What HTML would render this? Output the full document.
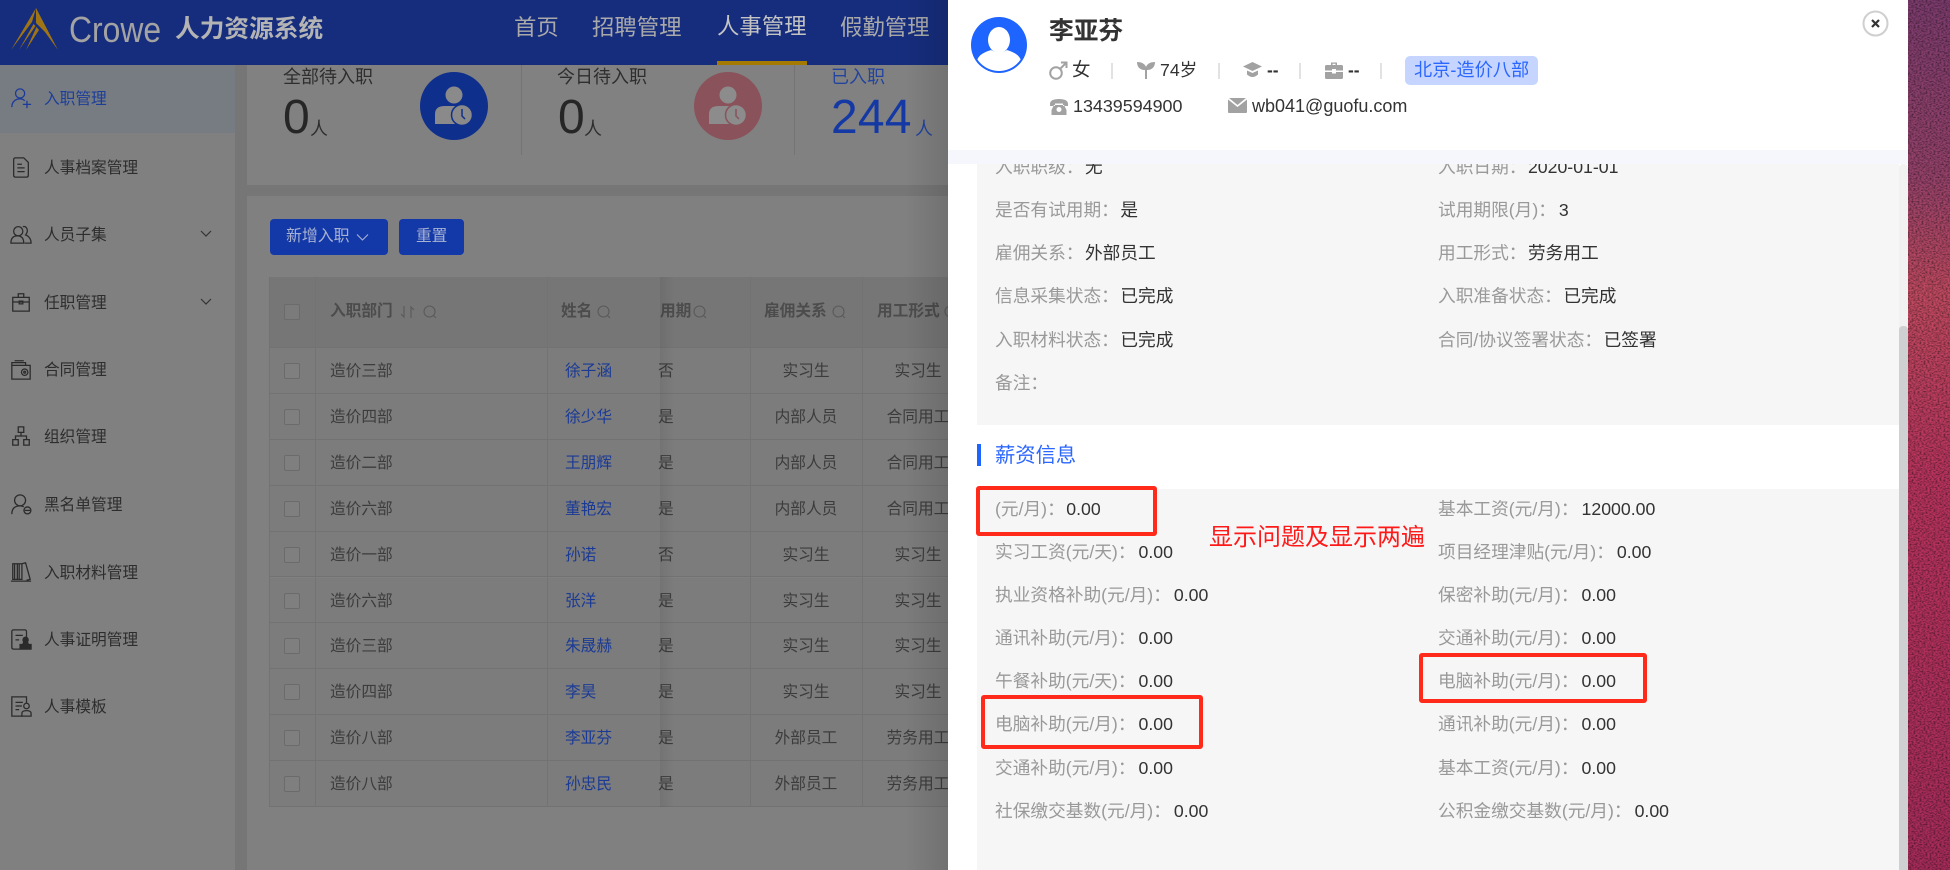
<!DOCTYPE html>
<html lang="zh"><head><meta charset="utf-8"><title>人力资源系统</title>
<style>
*{box-sizing:border-box;margin:0;padding:0}
html,body{width:1950px;height:870px;overflow:hidden;background:#767676}
body{font-family:"Liberation Sans","Noto Sans CJK SC",sans-serif;position:relative}
.a{position:absolute}
.t{position:absolute;white-space:nowrap;line-height:24px;height:24px}
.nav{font-size:22.4px;color:#a9a9a9;top:16px}
.m{font-size:15.7px;color:#2d2d2d;left:44px}
.ic{position:absolute;left:10px;width:22px;height:22px;fill:none;stroke:#2b2b2b;stroke-width:1.4}
.ch{position:absolute;left:200px;width:12px;height:8px;fill:none;stroke:#333;stroke-width:1.2}
.st{font-size:18px;color:#2e2e2e;top:65px}
.big{font-size:48px;line-height:50px;height:50px;top:93px;color:#262626}
.u{font-size:18px;top:117px;color:#2e2e2e}
.r{position:absolute;left:0;width:679px;height:45.9px;border-bottom:1px solid #727272;font-size:15.7px;color:#3c3c3c;line-height:47px;white-space:nowrap;background:#7c7c7c}
.r span{position:absolute;top:0}
.r i{position:absolute;left:15px;top:15px;width:16px;height:16px;border:1px solid #6b6b6b;border-radius:2px;background:#7f7f7f}
.r .d{left:61px}.r .n{left:296px;color:#1a3a96}.r .y{left:389px}.r .c1{left:481px;width:112px;text-align:center}.r .c2{left:593px;width:112px;text-align:center}
.v{position:absolute;top:277px;width:1px;height:530px;background:#737373}
.h{font-size:15.7px;font-weight:bold;color:#4c4c4c;top:300px}
.q{position:absolute;top:305px;width:14px;height:14px;fill:none;stroke:#5a5a5a;stroke-width:1.1}
.f{position:absolute;white-space:nowrap;font-size:17.7px;line-height:24px;height:24px;color:#999}
.f b{font-weight:normal;color:#333;margin-left:3px}
.f.n b{margin-left:1.5px}
.g{position:absolute;fill:#a2a2a2}
.sp{position:absolute;top:63px;width:2px;height:16px;background:#e2e2e2}
.box{position:absolute;border:4px solid #ff2a1a;border-radius:3px}
</style></head><body>
<div class="a" style="left:0;top:0;width:1950px;height:870px;overflow:hidden">

<!-- top bar -->
<div class="a" style="left:0;top:0;width:948px;height:65px;background:#162d7d"></div>
<svg class="a" style="left:0;top:0" width="70" height="60" viewBox="0 0 70 60"><path fill="#9f7414" d="M36 8L58 50L45 32L36 23ZM36 8L11 50L32 22ZM33.500 24L19 50L35.500 26ZM36.500 27L26 50L39 30Z"/></svg>
<div class="t" style="left:69px;top:12px;font-size:36px;line-height:36px;height:36px;color:#a3a3a3;transform:scaleX(.885);transform-origin:0 0">Crowe</div>
<div class="t" style="left:175px;top:18px;font-size:24.700px;font-weight:bold;color:#b4b4b4">人力资源系统</div>
<div class="t nav" style="left:514px">首页</div>
<div class="t nav" style="left:592px">招聘管理</div>
<div class="t nav" style="left:717px;top:15px;color:#c4c4c4">人事管理</div>
<div class="t nav" style="left:840px">假勤管理</div>
<div class="a" style="left:717px;top:61px;width:90px;height:4px;background:#a47a00"></div>

<!-- sidebar -->
<div class="a" style="left:0;top:65px;width:235px;height:805px;background:#808080"></div>
<div class="a" style="left:0;top:65px;width:235px;height:68px;background:#767c82"></div>
<svg class="ic" style="top:87px;stroke:#1b3a9a" viewBox="0 0 24 24"><circle cx="11" cy="7" r="5"/><path d="M2 22C2 16 6 13 11 13C14 13 15 14 16 15M14 19H23M18.500 15V23"/></svg>
<div class="t m" style="top:88px;color:#1d3d99">入职管理</div>
<svg class="ic" style="top:156px" viewBox="0 0 24 24"><path d="M6 2H15L20 7V21Q20 23 18 23H6Q4 23 4 21V4Q4 2 6 2ZM8 9H13M8 13H16M8 17H16"/></svg>
<div class="t m" style="top:156.500px">人事档案管理</div>
<svg class="ic" style="top:223px" viewBox="0 0 24 24"><circle cx="9" cy="9" r="5"/><path d="M1 22C1 16 4 14 8 14C12 14 15 16 15 22ZM14 4C18 3 21 8 17 13C20 14 23 17 23 22H16"/></svg>
<div class="t m" style="top:223.500px">人员子集</div>
<svg class="ch" style="top:230px" viewBox="0 0 12 8"><path d="M1 1L6 6L11 1"/></svg>
<svg class="ic" style="top:291px" viewBox="0 0 24 24"><path d="M3 7H21V22H3ZM9 7V3H15V7M3 12H21M10 11H14V14H10Z"/></svg>
<div class="t m" style="top:291.500px">任职管理</div>
<svg class="ch" style="top:298px" viewBox="0 0 12 8"><path d="M1 1L6 6L11 1"/></svg>
<svg class="ic" style="top:358px" viewBox="0 0 24 24"><path d="M2 5H17V8H22V23H2ZM2 8H17M5 3H15"/><circle cx="16" cy="15.500" r="3.500"/><circle cx="16" cy="15.500" r="1"/></svg>
<div class="t m" style="top:358.500px">合同管理</div>
<svg class="ic" style="top:425px" viewBox="0 0 24 24"><path d="M9 2H15V8H9ZM3 16H9V22H3ZM15 16H21V22H15ZM12 8V12M6 16V12H18V16"/></svg>
<div class="t m" style="top:425.500px">组织管理</div>
<svg class="ic" style="top:493px" viewBox="0 0 24 24"><circle cx="11" cy="8" r="6"/><path d="M2 23C2 17 5 14 11 14C13 14 14 14.500 15 15"/><circle cx="19" cy="19" r="3.800"/><path d="M16 19H22"/></svg>
<div class="t m" style="top:493.500px">黑名单管理</div>
<svg class="ic" style="top:561px" viewBox="0 0 24 24"><path d="M3 3H8V20H3ZM8 3H13V20H8ZM13 3L17 2L22 20L18 21M1 22H23M5 3V20M10 3V20"/></svg>
<div class="t m" style="top:561.500px">入职材料管理</div>
<svg class="ic" style="top:628px" viewBox="0 0 24 24"><path d="M18 10V4Q18 2 16 2H4Q2 2 2 4V21Q2 23 4 23H11M6 8H14M6 13H10"/><path fill="#2b2b2b" d="M17 10A3 3 0 0 1 19 15L20 18H23V23H11V18H14L15 15A3 3 0 0 1 17 10Z"/></svg>
<div class="t m" style="top:628.500px">人事证明管理</div>
<svg class="ic" style="top:695px" viewBox="0 0 24 24"><path d="M18 9V2H2V23H13M6 8H14M6 12H13M6 16H10"/><circle cx="18" cy="12" r="3"/><path d="M13 23V20Q13 17 18 17Q23 17 23 20V23Z"/></svg>
<div class="t m" style="top:695.500px">人事模板</div>

<!-- stats card -->
<div class="a" style="left:247px;top:65px;width:701px;height:120px;background:#818181"></div>
<div class="a" style="left:521px;top:65px;width:1px;height:90px;background:#747474"></div>
<div class="a" style="left:794px;top:65px;width:1px;height:90px;background:#747474"></div>
<div class="t st" style="left:283px">全部待入职</div>
<div class="t big" style="left:283px">0</div>
<div class="t u" style="left:310px">人</div>
<svg class="a" style="left:419px;top:71px" width="70" height="70" viewBox="0 0 70 70"><circle cx="35" cy="35" r="34" fill="#0f2f8c"/><circle cx="35" cy="24" r="8.500" fill="#8a8a8a"/><path d="M16 53V43Q16 35 26 35H42Q47 35 49 40V53Z" fill="#8a8a8a"/><circle cx="43" cy="44" r="10.500" fill="#8a8a8a" stroke="#0f2f8c" stroke-width="1.500"/><path d="M43 38V45L46 48" fill="none" stroke="#0f2f8c" stroke-width="1.500"/></svg>
<div class="t st" style="left:557px">今日待入职</div>
<div class="t big" style="left:558px">0</div>
<div class="t u" style="left:584px">人</div>
<svg class="a" style="left:693px;top:71px" width="70" height="70" viewBox="0 0 70 70"><circle cx="35" cy="35" r="34" fill="#8a525a"/><circle cx="35" cy="24" r="8.500" fill="#8c8c8c"/><path d="M16 53V43Q16 35 26 35H42Q47 35 49 40V53Z" fill="#8c8c8c"/><circle cx="43" cy="44" r="10.500" fill="#8c8c8c" stroke="#8a525a" stroke-width="1.500"/><path d="M43 38V45L46 48" fill="none" stroke="#8a525a" stroke-width="1.500"/></svg>
<div class="t st" style="left:831px;color:#23449e">已入职</div>
<div class="t big" style="left:831px;color:#1439a5;letter-spacing:.2px">244</div>
<div class="t u" style="left:915px;color:#23449e">人</div>

<!-- main card -->
<div class="a" style="left:247px;top:196px;width:701px;height:674px;background:#808080"></div>
<div class="a" style="left:270px;top:219px;width:118px;height:36px;background:#1338a8;border-radius:4px"></div>
<div class="t" style="left:286px;top:225px;font-size:15.900px;color:#a8b2d2">新增入职</div>
<svg class="a" style="left:356px;top:233px" width="13" height="9" viewBox="0 0 13 9"><path d="M1 1.500L6.500 7L12 1.500" fill="none" stroke="#a8b2d2" stroke-width="1.100"/></svg>
<div class="a" style="left:399px;top:219px;width:65px;height:36px;background:#1338a8;border-radius:4px"></div>
<div class="t" style="left:416px;top:225px;font-size:15.700px;color:#a8b2d2">重置</div>

<!-- table -->
<div class="a" style="left:269px;top:277px;width:679px;height:71px;background:#767676;border-bottom:1px solid #727272"></div>
<div class="a" style="left:269px;top:348px;width:679px;height:460px;overflow:hidden">
<div class="r" style="top:0"><i></i><span class="d">造价三部</span><span class="n">徐子涵</span><span class="y">否</span><span class="c1">实习生</span><span class="c2">实习生</span></div>
<div class="r" style="top:45.900px"><i></i><span class="d">造价四部</span><span class="n">徐少华</span><span class="y">是</span><span class="c1">内部人员</span><span class="c2">合同用工</span></div>
<div class="r" style="top:91.800px"><i></i><span class="d">造价二部</span><span class="n">王朋辉</span><span class="y">是</span><span class="c1">内部人员</span><span class="c2">合同用工</span></div>
<div class="r" style="top:137.700px"><i></i><span class="d">造价六部</span><span class="n">董艳宏</span><span class="y">是</span><span class="c1">内部人员</span><span class="c2">合同用工</span></div>
<div class="r" style="top:183.600px"><i></i><span class="d">造价一部</span><span class="n">孙诺</span><span class="y">否</span><span class="c1">实习生</span><span class="c2">实习生</span></div>
<div class="r" style="top:229.500px"><i></i><span class="d">造价六部</span><span class="n">张洋</span><span class="y">是</span><span class="c1">实习生</span><span class="c2">实习生</span></div>
<div class="r" style="top:275.400px"><i></i><span class="d">造价三部</span><span class="n">朱晟赫</span><span class="y">是</span><span class="c1">实习生</span><span class="c2">实习生</span></div>
<div class="r" style="top:321.300px"><i></i><span class="d">造价四部</span><span class="n">李昊</span><span class="y">是</span><span class="c1">实习生</span><span class="c2">实习生</span></div>
<div class="r" style="top:367.200px"><i></i><span class="d">造价八部</span><span class="n">李亚芬</span><span class="y">是</span><span class="c1">外部员工</span><span class="c2">劳务用工</span></div>
<div class="r" style="top:413.100px"><i></i><span class="d">造价八部</span><span class="n">孙忠民</span><span class="y">是</span><span class="c1">外部员工</span><span class="c2">劳务用工</span></div>
</div>
<div class="v" style="left:269px"></div>
<div class="v" style="left:315px"></div>
<div class="v" style="left:547px"></div>
<div class="v" style="left:750px"></div>
<div class="v" style="left:862px"></div>
<div class="a" style="left:284px;top:304px;width:16px;height:16px;border:1px solid #6b6b6b;border-radius:2px;background:#7b7b7b"></div>
<div class="t h" style="left:330px">入职部门</div>
<svg class="q" style="left:399px;width:18px" viewBox="0 0 18 14"><path d="M5 1V12L2 9M12 13V2L15 5"/></svg>
<svg class="q" style="left:423px" viewBox="0 0 14 14"><circle cx="6.500" cy="6.500" r="5.500"/><path d="M10.500 10.500L13 13"/></svg>
<div class="t h" style="left:561px">姓名</div>
<svg class="q" style="left:597px" viewBox="0 0 14 14"><circle cx="6.500" cy="6.500" r="5.500"/><path d="M10.500 10.500L13 13"/></svg>
<div class="t h" style="left:660px">用期</div>
<svg class="q" style="left:693px" viewBox="0 0 14 14"><circle cx="6.500" cy="6.500" r="5.500"/><path d="M10.500 10.500L13 13"/></svg>
<div class="t h" style="left:764px">雇佣关系</div>
<svg class="q" style="left:832px" viewBox="0 0 14 14"><circle cx="6.500" cy="6.500" r="5.500"/><path d="M10.500 10.500L13 13"/></svg>
<div class="t h" style="left:877px">用工形式</div>
<svg class="q" style="left:944px" viewBox="0 0 14 14"><circle cx="6.500" cy="6.500" r="5.500"/><path d="M10.500 10.500L13 13"/></svg>
<div class="a" style="left:660px;top:277px;width:14px;height:530px;background:linear-gradient(90deg,rgba(0,0,0,.07),rgba(0,0,0,0))"></div>
<div class="a" style="left:905px;top:0;width:43px;height:870px;background:linear-gradient(90deg,rgba(0,0,0,0),rgba(0,0,0,.12))"></div>

<!-- wallpaper strip -->
<svg class="a" style="left:1908px;top:0" width="42" height="870">
<defs>
<linearGradient id="bg" x1="0" y1="0" x2="0" y2="1"><stop offset="0" stop-color="#7c3c6e"/><stop offset=".2" stop-color="#95426a"/><stop offset=".34" stop-color="#c04a60"/><stop offset=".55" stop-color="#b8345e"/><stop offset="1" stop-color="#a62c5a"/></linearGradient>
<filter id="n" x="0" y="0" width="100%" height="100%"><feTurbulence type="fractalNoise" baseFrequency=".5 .7" numOctaves="3" seed="4"/><feColorMatrix values="0 0 0 0 0 0 0 0 0 0 0 0 0 0 0 1.100 0 0 0 -.42"/></filter>
</defs>
<rect width="42" height="870" fill="url(#bg)"/><rect width="42" height="870" filter="url(#n)"/>
</svg>

<!-- drawer -->
<div class="a" style="left:948px;top:0;width:960px;height:870px;background:#fff"></div>
<div class="a" style="left:948px;top:150px;width:960px;height:14px;background:#f5f7fc"></div>
<div class="a" style="left:948px;top:164px;width:951px;height:706px;overflow:hidden">
<div class="a" style="left:29px;top:-164px;width:922px;height:425px;background:#f6f6f6"></div>
<div class="a" style="left:29px;top:325px;width:922px;height:381px;background:#f6f6f6"></div>
</div>
<div class="a" style="left:1899px;top:164px;width:9px;height:706px;background:#f1f1f1;border-radius:4px 4px 0 0"></div>
<div class="a" style="left:1899px;top:326px;width:9px;height:544px;background:#cfd0d2;border-radius:4px 4px 0 0"></div>

<!-- drawer header -->
<svg class="a" style="left:971px;top:17px" width="56" height="56" viewBox="0 0 56 56"><defs><clipPath id="av"><circle cx="28" cy="28" r="26"/></clipPath></defs><circle cx="28" cy="28" r="28" fill="#1e64ff"/><g clip-path="url(#av)" fill="#fff"><ellipse cx="28" cy="23" rx="11" ry="13"/><path d="M6 56V44Q7 37 20 33Q28 38 36 33Q49 37 50 44V56Z"/></g></svg>
<div class="t" style="left:1049px;top:18px;height:28px;line-height:28px;font-size:24.700px;font-weight:bold;color:#333">李亚芬</div>
<svg class="g" style="left:1049px;top:61px" width="19" height="19" viewBox="0 0 19 19"><circle cx="7" cy="12" r="5.800" fill="none" stroke="#a2a2a2" stroke-width="2"/><path d="M11 8L17 2M12 1.500H17.500V7" fill="none" stroke="#a2a2a2" stroke-width="2"/></svg>
<div class="t" style="left:1072px;top:58px;font-size:18.500px;color:#333">女</div>
<div class="sp" style="left:1111px"></div>
<svg class="g" style="left:1137px;top:61px" width="18" height="18" viewBox="0 0 18 18"><path d="M8 18V9C3 9 0 6 0 1C5 1 8 3 9 6C10 3 13 1 18 1C18 6 15 9 10 9V18Z"/></svg>
<div class="t" style="left:1160px;top:58px;font-size:17.700px;color:#333">74岁</div>
<div class="sp" style="left:1218px"></div>
<svg class="g" style="left:1243px;top:61px" width="19" height="17" viewBox="0 0 19 17"><path d="M9.500 1L19 5.500L9.500 10L0 5.500ZM4 9.500L9.500 12L15 9.500V13.500Q9.500 18.500 4 13.500Z"/></svg>
<div class="t" style="left:1267px;top:58px;font-size:17.400px;font-weight:bold;color:#333">--</div>
<div class="sp" style="left:1299px"></div>
<svg class="g" style="left:1325px;top:62px" width="18" height="17" viewBox="0 0 18 17"><path d="M6 3V0.500H12V3H16.500Q18 3 18 4.500V8.500H11V7H7V8.500H0V4.500Q0 3 1.500 3ZM7.500 1.800V3H10.500V1.800ZM0 10H7V11.500H11V10H18V15.500Q18 17 16.500 17H1.500Q0 17 0 15.500Z"/></svg>
<div class="t" style="left:1348px;top:58px;font-size:17.400px;font-weight:bold;color:#333">--</div>
<div class="sp" style="left:1380px"></div>
<div class="a" style="left:1405px;top:56px;width:133px;height:29px;background:#c5d5ff;border-radius:5px"></div>
<div class="t" style="left:1414px;top:58px;font-size:18.200px;color:#2b66ff">北京-造价八部</div>
<svg class="g" style="left:1050px;top:98px" width="18" height="17" viewBox="0 0 18 17"><path d="M0 6Q0 1 9 1Q18 1 18 6V8H13V5.500H5V8H0ZM4 7H14L16.500 12V17H1.500V12ZM9 9A2.500 2.500 0 1 0 9 14A2.500 2.500 0 1 0 9 9Z" fill-rule="evenodd"/></svg>
<div class="t" style="left:1073px;top:94px;font-size:17.900px;color:#333">13439594900</div>
<svg class="g" style="left:1228px;top:98px" width="19" height="15" viewBox="0 0 19 15"><path d="M1 0H18L9.500 7ZM0 1.500L9.500 9L19 1.500V14Q19 15 18 15H1Q0 15 0 14Z"/></svg>
<div class="t" style="left:1252px;top:94px;font-size:18px;color:#333">wb041@guofu.com</div>
<svg class="a" style="left:1862px;top:10px" width="27" height="27" viewBox="0 0 27 27"><circle cx="13.500" cy="13.500" r="12" fill="#fff" stroke="#cfcfcf" stroke-width="2"/><path d="M10 10L17 17M17 10L10 17" stroke="#333" stroke-width="2.200" fill="none"/></svg>

<!-- drawer body -->
<div class="a" style="left:948px;top:164px;width:951px;height:706px;overflow:hidden">
<div class="f n" style="left:47px;top:-9px">入职职级：<b>无</b></div>
<div class="f n" style="left:490px;top:-9px">入职日期：<b>2020-01-01</b></div>
<div class="f n" style="left:47px;top:34px">是否有试用期：<b>是</b></div>
<div class="f" style="left:490px;top:34px">试用期限(月)：<b>3</b></div>
<div class="f n" style="left:47px;top:77px">雇佣关系：<b>外部员工</b></div>
<div class="f n" style="left:490px;top:77px">用工形式：<b>劳务用工</b></div>
<div class="f n" style="left:47px;top:120px">信息采集状态：<b>已完成</b></div>
<div class="f n" style="left:490px;top:120px">入职准备状态：<b>已完成</b></div>
<div class="f n" style="left:47px;top:164px">入职材料状态：<b>已完成</b></div>
<div class="f n" style="left:490px;top:164px">合同/协议签署状态：<b>已签署</b></div>
<div class="f" style="left:47px;top:207px">备注：</div>
</div>
<div class="a" style="left:977px;top:444px;width:4px;height:22px;background:#1e64ff"></div>
<div class="t" style="left:995px;top:444px;font-size:20.300px;color:#2b66ff">薪资信息</div>
<div class="f n" style="left:995px;top:497px">(元/月)：<b>0.00</b></div>
<div class="f" style="left:1438px;top:497px">基本工资(元/月)：<b>12000.00</b></div>
<div class="f" style="left:995px;top:540px">实习工资(元/天)：<b>0.00</b></div>
<div class="f" style="left:1438px;top:540px">项目经理津贴(元/月)：<b>0.00</b></div>
<div class="f" style="left:995px;top:583px">执业资格补助(元/月)：<b>0.00</b></div>
<div class="f" style="left:1438px;top:583px">保密补助(元/月)：<b>0.00</b></div>
<div class="f" style="left:995px;top:626px">通讯补助(元/月)：<b>0.00</b></div>
<div class="f" style="left:1438px;top:626px">交通补助(元/月)：<b>0.00</b></div>
<div class="f" style="left:995px;top:669px">午餐补助(元/天)：<b>0.00</b></div>
<div class="f" style="left:1438px;top:669px">电脑补助(元/月)：<b>0.00</b></div>
<div class="f" style="left:995px;top:712px">电脑补助(元/月)：<b>0.00</b></div>
<div class="f" style="left:1438px;top:712px">通讯补助(元/月)：<b>0.00</b></div>
<div class="f" style="left:995px;top:756px">交通补助(元/月)：<b>0.00</b></div>
<div class="f" style="left:1438px;top:756px">基本工资(元/月)：<b>0.00</b></div>
<div class="f" style="left:995px;top:799px">社保缴交基数(元/月)：<b>0.00</b></div>
<div class="f" style="left:1438px;top:799px">公积金缴交基数(元/月)：<b>0.00</b></div>

<!-- annotations -->
<div class="box" style="left:976px;top:486px;width:181px;height:50px"></div>
<div class="box" style="left:1419px;top:653px;width:228px;height:50px"></div>
<div class="box" style="left:981px;top:695px;width:222px;height:54px"></div>
<div class="t" style="left:1209px;top:524px;height:28px;line-height:28px;font-size:24px;color:#ff1a1a">显示问题及显示两遍</div>
</div>
</body></html>
